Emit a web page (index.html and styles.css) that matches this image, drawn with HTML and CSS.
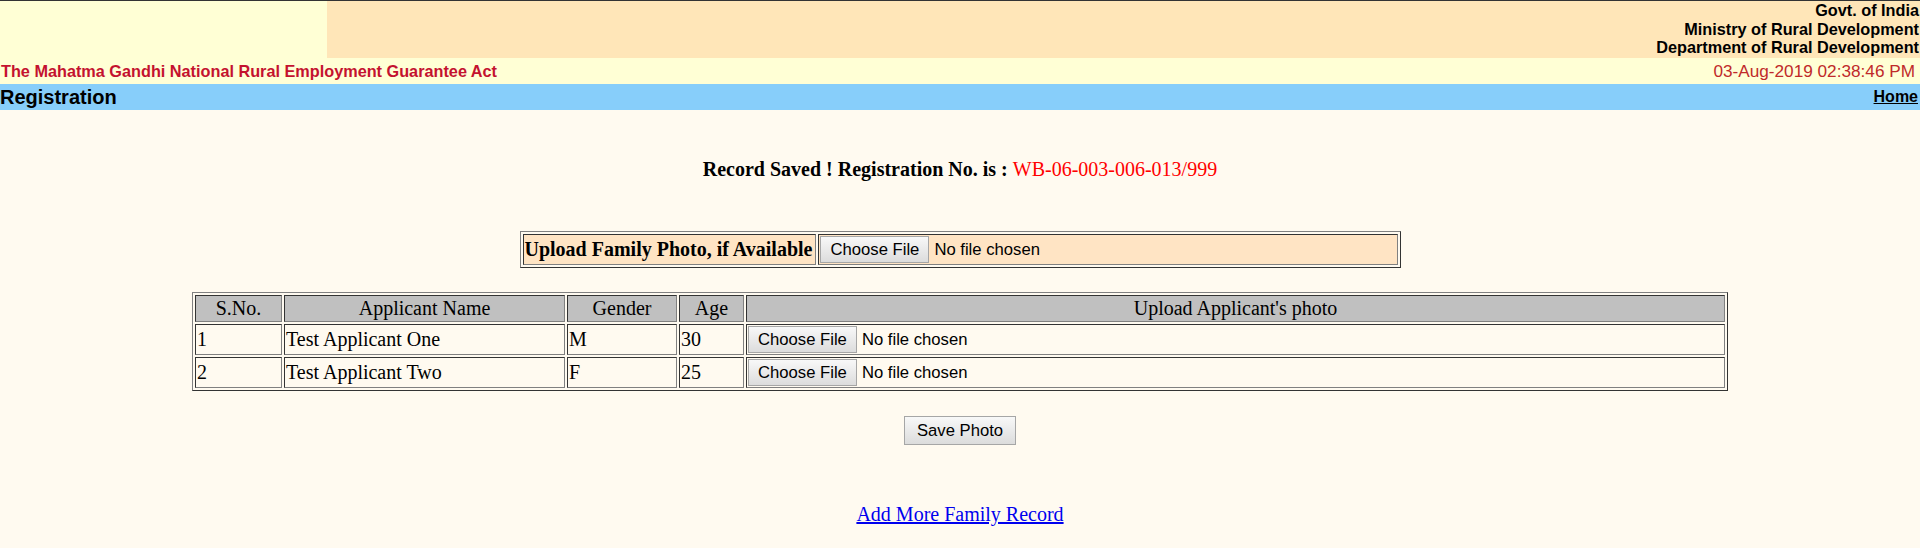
FILE: index.html
```html
<!DOCTYPE html>
<html lang="en">
<head>
  <meta charset="UTF-8" />
  <meta name="viewport" content="width=device-width, initial-scale=1.0"/>
  <title>Registration</title>
  <link rel="stylesheet" href="styles.css">
</head>
<body>
  <!-- Header -->
  <div class="masthead">
    <div class="logo-cell"></div>
    <div class="govt">
      <div>Govt. of India</div>
      <div>Ministry of Rural Development</div>
      <div>Department of Rural Development</div>
    </div>
  </div>
  <div class="actbar">
    <span class="act-title">The Mahatma Gandhi National Rural Employment Guarantee Act</span>
    <span class="act-date">03-Aug-2019 02:38:46 PM</span>
  </div>
  <div class="navbar">
    <span class="page-title">Registration</span>
    <a class="home-link" href="#">Home</a>
  </div>

  <div class="message">
    Record Saved ! Registration No. is : <span class="reg-no">WB-06-003-006-013/999</span>
  </div>

  <table class="grid family">
    <tr>
      <td class="label">Upload Family Photo, if Available</td>
      <td><input type="file" class="file-input"></td>
    </tr>
  </table>

  <table class="grid applicants">
    <tr>
      <th class="col-sno">S.No.</th>
      <th class="col-name">Applicant Name</th>
      <th class="col-gender">Gender</th>
      <th class="col-age">Age</th>
      <th>Upload Applicant's photo</th>
    </tr>
    <tr>
      <td>1</td>
      <td>Test Applicant One</td>
      <td>M</td>
      <td>30</td>
      <td><input type="file" class="file-input"></td>
    </tr>
    <tr>
      <td>2</td>
      <td>Test Applicant Two</td>
      <td>F</td>
      <td>25</td>
      <td><input type="file" class="file-input"></td>
    </tr>
  </table>

  <div class="actions">
    <button class="btn">Save Photo</button>
  </div>

  <div class="more">
    <a href="#">Add More Family Record</a>
  </div>
</body>
</html>
```

FILE: styles.css
```css
body {
  margin: 0;
  background: #fffaf0;
  font-family: "Liberation Serif", "Times New Roman", serif;
  font-size: 20px;
  color: #000;
}

/* header */
.masthead {
  display: flex;
  height: 57px;
  border-top: 1px solid #333;
}

.logo-cell {
  width: 327px;
  background: #ffffd5;
}

.govt {
  flex: 1;
  background: #ffe6b8;
  text-align: right;
  font-family: "Liberation Sans", Arial, sans-serif;
  font-weight: bold;
  font-size: 16.25px;
  line-height: 18.7px;
  padding-right: 1px;
}

.actbar {
  display: flex;
  justify-content: space-between;
  align-items: center;
  height: 26px;
  background: #ffffd5;
  font-family: "Liberation Sans", Arial, sans-serif;
  font-size: 16.25px;
}

.act-title {
  font-weight: bold;
  color: #c4122f;
  padding-left: 1px;
}

.act-date {
  font-size: 17.2px;
  color: #c02a2a;
  padding-right: 5px;
}

.navbar {
  display: flex;
  justify-content: space-between;
  align-items: center;
  height: 26px;
  background: #87cefa;
  font-family: "Liberation Sans", Arial, sans-serif;
  font-weight: bold;
}

.page-title {
  font-size: 20px;
}

.home-link {
  font-size: 16px;
  color: #000;
  padding-right: 2px;
}

/* content */
.message {
  text-align: center;
  font-weight: bold;
  line-height: 23px;
  margin-top: 48px;
}

.reg-no {
  color: #ff0000;
  font-weight: normal;
}

.grid {
  margin: 0 auto;
  border-collapse: separate;
  border-spacing: 2px;
  border: 1px solid;
  border-color: #808080 #333 #333 #808080;
}

.grid td,
.grid th {
  padding: 1px;
  border: 1px solid;
  border-color: #333 #808080 #808080 #333;
  line-height: 23px;
}

.grid th {
  background: #c0c0c0;
  font-weight: normal;
}

.grid td {
  text-align: left;
}

.family {
  width: 881px;
  margin-top: 50px;
}

.family td {
  background: #ffe4c4;
}

.family .label {
  font-weight: bold;
  white-space: nowrap;
  width: 1px;
  padding-right: 3px;
}

.applicants {
  width: 80%;
  margin-top: 24px;
}

.col-sno { width: 83px; }
.col-name { width: 277px; }
.col-gender { width: 106px; }
.col-age { width: 61px; }

.file-input {
  font-family: "Liberation Sans", Arial, sans-serif;
  font-size: 16.67px;
  vertical-align: middle;
}

.file-input::file-selector-button,
.btn {
  font-family: "Liberation Sans", Arial, sans-serif;
  font-size: 16.67px;
  color: #000;
  background: linear-gradient(#f8f8f8, #dcdcdc);
  border: 1px solid #a6a6a6;
  border-radius: 0;
  padding: 3px 9px;
  margin-right: 5px;
  line-height: 19px;
}

.actions {
  text-align: center;
  margin-top: 25px;
}

.btn {
  padding: 4px 12px;
  margin: 0;
}

.more {
  text-align: center;
  margin-top: 58px;
  line-height: 23px;
}

.more a {
  color: #0000ee;
}
```
